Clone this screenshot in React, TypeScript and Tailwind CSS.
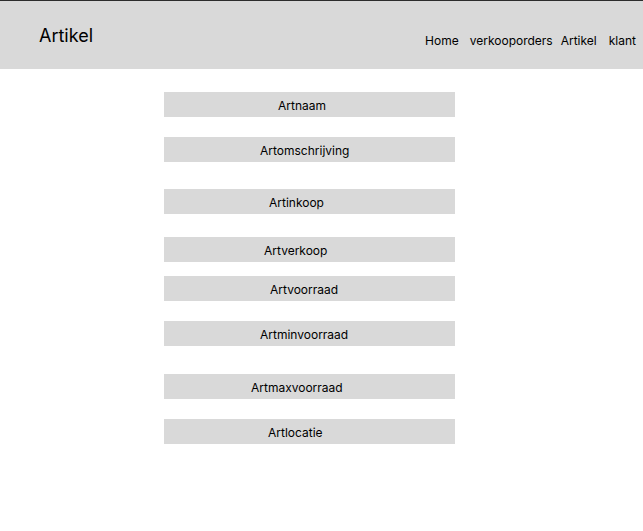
const FIELDS = [
  { label: 'Artnaam', mt: 'mt-[23px]', pl: 'pl-[114px]' },
  { label: 'Artomschrijving', mt: 'mt-[20px]', pl: 'pl-[96px]' },
  { label: 'Artinkoop', mt: 'mt-[27px]', pl: 'pl-[105px]' },
  { label: 'Artverkoop', mt: 'mt-[23px]', pl: 'pl-[100px]' },
  { label: 'Artvoorraad', mt: 'mt-[14px]', pl: 'pl-[106px]' },
  { label: 'Artminvoorraad', mt: 'mt-[20px]', pl: 'pl-[96px]' },
  { label: 'Artmaxvoorraad', mt: 'mt-[28px]', pl: 'pl-[87px]' },
  { label: 'Artlocatie', mt: 'mt-[20px]', pl: 'pl-[104px]' },
];

export default function App() {
  return (
    <div className="w-[643px] h-[531px] bg-white text-black font-['Inter',sans-serif] overflow-hidden">
      {/* header */}
      <header className="h-[69px] bg-[#d9d9d9] border-t border-[#2c2c2c] flex justify-between">
        <h1 className="pl-[39px] pt-[24px] text-[18px] leading-[22px] font-normal">Artikel</h1>
        <nav className="flex pt-[32px] pr-[7px] text-[12px] leading-[16px]">
          <span>Home</span>
          <span className="ml-[11px]">verkooporders</span>
          <span className="ml-[8px]">Artikel</span>
          <span className="ml-[12px]">klant</span>
        </nav>
      </header>

      {/* field list */}
      <div className="flex flex-col">
        {FIELDS.map((f) => (
          <div
            key={f.label}
            className={`${f.mt} ${f.pl} ml-[164px] w-[291px] h-[25px] pt-[2px] bg-[#d9d9d9] flex items-center text-[12px]`}
          >
            {f.label}
          </div>
        ))}
      </div>
    </div>
  );
}
